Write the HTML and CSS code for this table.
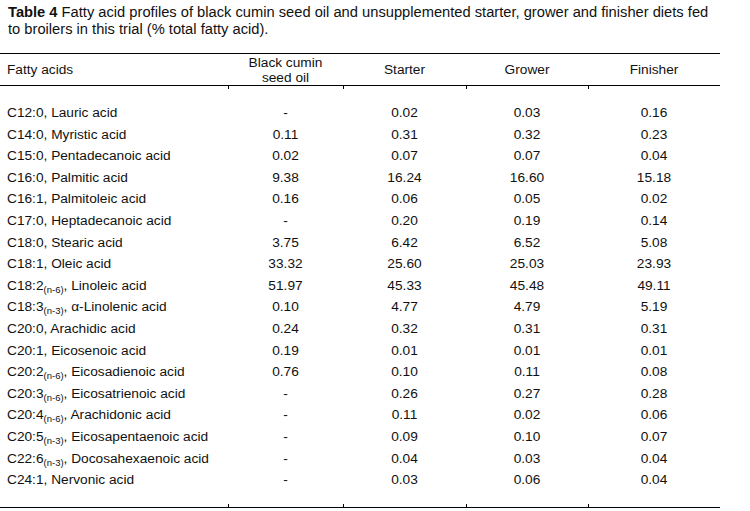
FILE: index.html
```html
<!DOCTYPE html>
<html>
<head>
<meta charset="utf-8">
<link rel="stylesheet" href="styles.css">
</head>
<body>
<div class="page">
  <p class="caption"><b>Table 4</b> Fatty acid profiles of black cumin seed oil and unsupplemented starter, grower and finisher diets fed to broilers in this trial (% total fatty acid).</p>
  <table class="data">
    <colgroup>
      <col class="c-name"><col class="c-oil"><col class="c-start"><col class="c-grow"><col class="c-fin">
    </colgroup>
    <thead>
      <tr>
        <th class="name">Fatty acids</th>
        <th class="tick">Black cumin<br>seed oil</th>
        <th class="tick">Starter</th>
        <th class="tick">Grower</th>
        <th class="tick">Finisher</th>
      </tr>
    </thead>
    <tbody>
      <tr class="first"><td>C12:0, Lauric acid</td><td>-</td><td>0.02</td><td>0.03</td><td>0.16</td></tr>
      <tr><td>C14:0, Myristic acid</td><td>0.11</td><td>0.31</td><td>0.32</td><td>0.23</td></tr>
      <tr><td>C15:0, Pentadecanoic acid</td><td>0.02</td><td>0.07</td><td>0.07</td><td>0.04</td></tr>
      <tr><td>C16:0, Palmitic acid</td><td>9.38</td><td>16.24</td><td>16.60</td><td>15.18</td></tr>
      <tr><td>C16:1, Palmitoleic acid</td><td>0.16</td><td>0.06</td><td>0.05</td><td>0.02</td></tr>
      <tr><td>C17:0, Heptadecanoic acid</td><td>-</td><td>0.20</td><td>0.19</td><td>0.14</td></tr>
      <tr><td>C18:0, Stearic acid</td><td>3.75</td><td>6.42</td><td>6.52</td><td>5.08</td></tr>
      <tr><td>C18:1, Oleic acid</td><td>33.32</td><td>25.60</td><td>25.03</td><td>23.93</td></tr>
      <tr><td>C18:2<sub>(n-6)</sub>, Linoleic acid</td><td>51.97</td><td>45.33</td><td>45.48</td><td>49.11</td></tr>
      <tr><td>C18:3<sub>(n-3)</sub>, α-Linolenic acid</td><td>0.10</td><td>4.77</td><td>4.79</td><td>5.19</td></tr>
      <tr><td>C20:0, Arachidic acid</td><td>0.24</td><td>0.32</td><td>0.31</td><td>0.31</td></tr>
      <tr><td>C20:1, Eicosenoic acid</td><td>0.19</td><td>0.01</td><td>0.01</td><td>0.01</td></tr>
      <tr><td>C20:2<sub>(n-6)</sub>, Eicosadienoic acid</td><td>0.76</td><td>0.10</td><td>0.11</td><td>0.08</td></tr>
      <tr><td>C20:3<sub>(n-6)</sub>, Eicosatrienoic acid</td><td>-</td><td>0.26</td><td>0.27</td><td>0.28</td></tr>
      <tr><td>C20:4<sub>(n-6)</sub>, Arachidonic acid</td><td>-</td><td>0.11</td><td>0.02</td><td>0.06</td></tr>
      <tr><td>C20:5<sub>(n-3)</sub>, Eicosapentaenoic acid</td><td>-</td><td>0.09</td><td>0.10</td><td>0.07</td></tr>
      <tr><td>C22:6<sub>(n-3)</sub>, Docosahexaenoic acid</td><td>-</td><td>0.04</td><td>0.03</td><td>0.04</td></tr>
      <tr class="last"><td>C24:1, Nervonic acid</td><td>-</td><td>0.03</td><td>0.06</td><td>0.04</td></tr>
    </tbody>
  </table>
</div>
</body>
</html>
```

FILE: styles.css
```css
html, body {
  margin: 0;
  padding: 0;
  background: #ffffff;
}
body {
  font-family: "Liberation Sans", Arial, sans-serif;
  color: #111111;
}
.page {
  padding: 4px 0 0 0;
}
.caption {
  margin: 0 0 0 8px;
  width: 705px;
  font-size: 14.7px;
  line-height: 17px;
}
.caption b {
  font-weight: bold;
}
.data {
  margin-top: 15px;
  width: 720px;
  border-collapse: collapse;
  font-size: 13.7px;
  table-layout: fixed;
}
.c-name { width: 228px; }
.c-oil { width: 115px; }
.c-start { width: 123px; }
.c-grow { width: 122px; }
.c-fin { width: 132px; }
.data thead tr {
  border-top: 1.5px solid #000;
  border-bottom: 1.5px solid #000;
}
.data th {
  font-weight: normal;
  text-align: center;
  height: 31px;
  line-height: 15px;
  padding: 0;
  vertical-align: middle;
}
.data th.name {
  text-align: left;
  padding-left: 7px;
}
.data th.tick {
  position: relative;
}
.data th.tick::after {
  content: "";
  position: absolute;
  left: 0;
  bottom: -4px;
  width: 1px;
  height: 3px;
  background: #000;
}
.data tbody tr.last {
  border-bottom: 1.5px solid #000;
}
.data td {
  padding: 0;
  height: 21.6px;
  line-height: 21.6px;
  text-align: center;
  white-space: nowrap;
}
.data td:first-child {
  text-align: left;
  padding-left: 7px;
}
.data tr.first td {
  padding-top: 16px;
}
.data tr.last td {
  padding-bottom: 16px;
  position: relative;
}
.data tr.last td + td::before {
  content: "";
  position: absolute;
  left: 0;
  bottom: 0;
  width: 1px;
  height: 3px;
  background: #000;
}
.data sub {
  font-size: 9.5px;
  line-height: 0;
  vertical-align: -3px;
}
```
